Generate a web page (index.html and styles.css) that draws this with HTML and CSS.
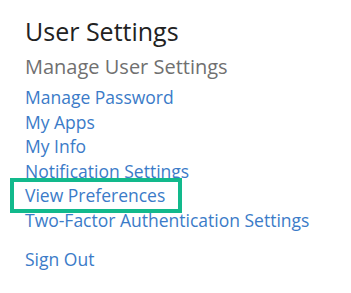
FILE: index.html
```html
<!DOCTYPE html>
<html lang="en">
<head>
<meta charset="utf-8">
<title>User Settings</title>
<link rel="stylesheet" href="styles.css">
</head>
<body>
<div class="page">
  <h1 class="title">User Settings</h1>
  <h2 class="subtitle">Manage User Settings</h2>
  <ul class="links">
    <li><a href="#">Manage Password</a></li>
    <li><a href="#">My Apps</a></li>
    <li><a href="#">My Info</a></li>
    <li><a href="#">Notification Settings</a></li>
    <li><a class="highlight" href="#">View Preferences</a></li>
    <li><a href="#">Two-Factor Authentication Settings</a></li>
  </ul>
  <a class="signout" href="#">Sign Out</a>
</div>
</body>
</html>
```
FILE: styles.css
```css
html, body {
  margin: 0;
  padding: 0;
  background: #ffffff;
}
.page {
  font-family: "Open Sans", "Liberation Sans", sans-serif;
  padding: 14px 0 0 25px;
  display: flex;
  flex-direction: column;
  align-items: flex-start;
}
.title {
  margin: 0;
  font-size: 25px;
  line-height: 34px;
  font-weight: 400;
  color: #222222;
}
.subtitle {
  margin: 5px 0 0;
  font-size: 20px;
  line-height: 28px;
  font-weight: 400;
  color: #707070;
}
.links {
  list-style: none;
  margin: 4px 0 0;
  padding: 0;
}
.links li {
  font-size: 17.5px;
  line-height: 24.6px;
}
.links a, .signout {
  color: #3b7bc8;
  text-decoration: none;
}
.highlight {
  position: relative;
}
.highlight::after {
  content: "";
  position: absolute;
  top: -5px;
  bottom: -6px;
  left: -15px;
  right: -17px;
  border: 4px solid #12b98c;
  pointer-events: none;
}
.signout {
  margin-top: 14px;
  font-size: 17.5px;
  line-height: 24.6px;
}
```
